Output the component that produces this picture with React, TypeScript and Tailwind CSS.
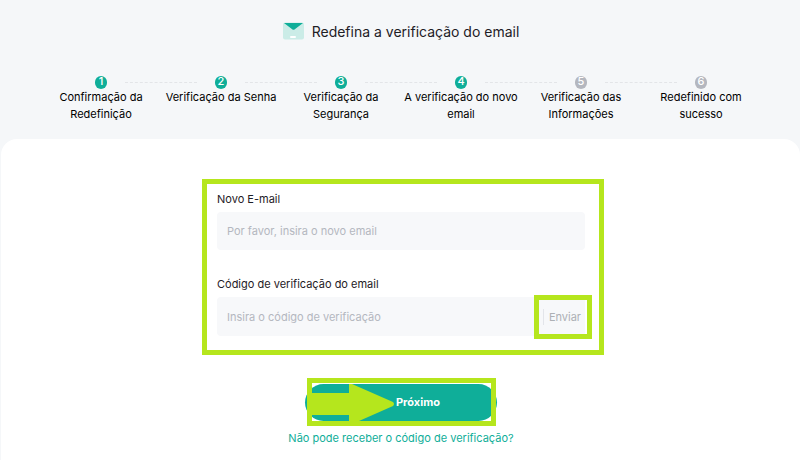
import { clsx } from 'clsx'

interface Step {
  label: string
  done: boolean
}

const STEPS: Step[] = [
  { label: 'Confirmação da Redefinição', done: true },
  { label: 'Verificação da Senha', done: true },
  { label: 'Verificação da Segurança', done: true },
  { label: 'A verificação do novo email', done: true },
  { label: 'Verificação das Informações', done: false },
  { label: 'Redefinido com sucesso', done: false },
]

function MailIcon() {
  return (
    <svg width="21" height="20" viewBox="0 0 21 20" aria-hidden="true">
      <rect y="0.5" width="21" height="17" rx="2" fill="#cbece7" />
      <path d="M1 1h19l-8.5 6.4a1.6 1.6 0 0 1-2 0z" fill="#0fae99" />
      <rect x="7" y="14" width="6" height="2" rx="1" fill="#fff" />
    </svg>
  )
}

function StepItem({ step, index }: { step: Step; index: number }) {
  return (
    <li className="relative flex flex-1 flex-col items-center text-center">
      {/* Connector to the previous step */}
      {index > 0 && (
        <span
          className="absolute top-[6px] right-full w-[72px] translate-x-1/2 border-t border-dashed border-[#e3e5e8]"
          aria-hidden="true"
        />
      )}
      <span
        className={clsx(
          'flex h-[13px] w-3 items-start justify-center rounded-full text-[11px] leading-[11px] font-medium text-white',
          step.done ? 'bg-[#0fae99]' : 'bg-[#b4b7bf]',
        )}
      >
        {index + 1}
      </span>
      <span className="text-[11px] leading-[17px] text-black">{step.label}</span>
    </li>
  )
}

export default function App() {
  return (
    <div className="min-h-screen bg-[#f5f7f9] font-['Inter','Liberation_Sans',sans-serif] text-[#1e2026]">
      <header className="pl-0.5">
        <div className="flex items-center justify-center gap-2 pt-5">
          <MailIcon />
          <h1 className="text-sm leading-6">Redefina a verificação do email</h1>
        </div>
        <ol className="mx-auto mt-8 flex max-w-[720px] pb-4">
          {STEPS.map((step, i) => (
            <StepItem key={step.label} step={step} index={i} />
          ))}
        </ol>
      </header>

      <main className="ml-px flex min-h-[321px] flex-col items-center rounded-t-2xl bg-white pt-10 pl-px">
        <form className="flex w-full flex-col items-center" onSubmit={(e) => e.preventDefault()}>
          <div className="ml-1 w-full max-w-[402px] border-5 border-[#b5e61d] pt-1 pr-[14px] pb-[14px] pl-[10px]">
            <label htmlFor="email" className="mb-0.5 block text-[11px] leading-[22px]">
              Novo E-mail
            </label>
            <input
              id="email"
              type="email"
              placeholder="Por favor, insira o novo email"
              className="block h-[38px] w-full rounded-sm bg-[#f7f8fa] px-[10px] text-[11px] placeholder:text-[#b4b7bf]"
            />

            <label htmlFor="code" className="mt-[23px] mb-0.5 block text-[11px] leading-[22px]">
              Código de verificação do email
            </label>
            <div className="relative flex h-[39px] items-center rounded-sm bg-[#f7f8fa]">
              <input
                id="code"
                type="text"
                placeholder="Insira o código de verificação"
                className="h-full min-w-0 flex-1 bg-transparent px-[10px] text-[11px] placeholder:text-[#b4b7bf]"
              />
              <button
                type="button"
                className="mr-1 h-4 border-l border-[#e3e5ea] pl-[5px] text-[11px] leading-4 text-[#adb0b5]"
              >
                Enviar
              </button>
              <span
                className="pointer-events-none absolute -top-0.5 -right-[7px] h-11 w-[58px] border-5 border-[#b5e61d]"
                aria-hidden="true"
              />
            </div>
          </div>

          <div className="relative mt-[29px] w-48">
            <button
              type="submit"
              className="h-[37px] w-full rounded-full bg-[#0fae99] pl-[34px] text-[11px] font-bold text-white"
            >
              Próximo
            </button>
            {/* Highlight frame and pointer over the button */}
            <span
              className="pointer-events-none absolute -top-1.5 left-0.5 h-12 w-[189px] border-5 border-[#b5e61d]"
              aria-hidden="true"
            />
            <svg
              className="pointer-events-none absolute top-0 left-[7px]"
              width="83"
              height="37"
              viewBox="0 0 83 37"
              aria-hidden="true"
            >
              <path d="M0 9h37V0h3l41 18q2 2 0 4L47 37H37V31H0z" fill="#b5e61d" />
            </svg>
          </div>
        </form>
        <a href="#ajuda" className="mt-[7px] text-[11px] leading-5 text-[#0fae99]">
          Não pode receber o código de verificação?
        </a>
      </main>
    </div>
  )
}
